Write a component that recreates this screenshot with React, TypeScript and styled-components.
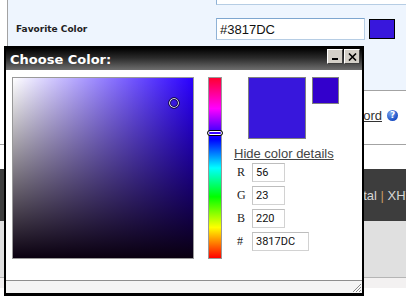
import React from "react";
import styled, { createGlobalStyle } from "styled-components";

const GlobalStyle = createGlobalStyle`
  html, body { margin: 0; padding: 0; background: #ffffff; overflow: hidden; }
  * { box-sizing: border-box; }
`;

const Page = styled.div`
  position: relative;
  width: 406px;
  height: 300px;
  overflow: hidden;
  font-family: "Liberation Sans", Arial, sans-serif;
`;

const FormPanel = styled.div`
  margin-left: 7px;
  height: 108px;
  background: #eef5fe;
  border-left: 1px solid #a3a3a3;
  border-bottom: 1px solid #a3a3a3;
  padding-left: 8px;
`;

const TopRow = styled.div`
  display: flex;
  padding-left: 200px;
  margin-top: -17px;
`;

const FieldRow = styled.div`
  display: flex;
  align-items: center;
  margin-top: 13px;
`;

const FieldLabel = styled.label`
  flex: none;
  width: 200px;
  font-family: "DejaVu Sans", Verdana, sans-serif;
  font-weight: bold;
  font-size: 9px;
  color: #222;
`;

const FieldInput = styled.div<{ $w: number }>`
  flex: none;
  width: ${(p) => p.$w}px;
  height: 22px;
  background: #fff;
  border: 1px solid #b6cde4;
  border-top-color: #7ea6cf;
  border-left-color: #8fb2d6;
  padding: 0 3px;
  display: flex;
  align-items: center;
  font-family: "Liberation Sans", Arial, sans-serif;
  font-size: 13px;
  color: #111;
`;

const FieldSwatch = styled.div<{ $c: string }>`
  flex: none;
  width: 26px;
  height: 20px;
  margin-left: 4px;
  background: ${(p) => p.$c};
  border: 1px solid #000;
`;

const LinkRow = styled.div`
  height: 54px;
  border-bottom: 1px solid #a3a3a3;
  display: flex;
  justify-content: flex-end;
  align-items: center;
  gap: 5px;
  padding: 0 8px 5px 0;
`;

const HelpLink = styled.a`
  font-size: 13px;
  color: #333;
  text-decoration: underline;
`;

const HelpIcon = styled.span`
  width: 11px;
  height: 11px;
  border-radius: 50%;
  background: radial-gradient(circle at 35% 30%, #7aa7f0, #1b4fc4 70%);
  color: #fff;
  font-size: 9px;
  font-weight: bold;
  line-height: 11px;
  text-align: center;
  font-family: "DejaVu Sans", sans-serif;
`;

const Spacer = styled.div`
  height: 24px;
`;

const DarkBar = styled.div`
  height: 52px;
  background: #3d3d3d;
  display: flex;
  align-items: center;
  padding-left: 343px;
  white-space: nowrap;
  font-size: 13px;
  color: #d6d6d6;
`;

const Sep = styled.span`
  color: #c79a62;
`;

const LightArea = styled.div`
  height: 57px;
  background: #e0e0e0;
  border-bottom: 1px solid #b5b5b5;
`;

const BottomStrip = styled.div`
  height: 10px;
  background: #f3f1f1;
`;

/* Dialog */
const Dialog = styled.div`
  position: absolute;
  left: 4px;
  top: 46px;
  width: 360px;
  height: 250px;
  border: 2px solid #000;
  border-bottom-width: 3px;
  background: #fff;
  display: flex;
  flex-direction: column;
`;

const TitleBar = styled.div`
  flex: none;
  height: 22px;
  background: linear-gradient(to bottom, #000 0%, #2a2a2a 45%, #6e6e6e 100%);
  display: flex;
  align-items: center;
  padding-left: 4px;
`;

const Title = styled.div`
  flex: 1;
  font-family: "DejaVu Sans", Verdana, sans-serif;
  font-weight: bold;
  font-size: 13px;
  color: #fff;
  padding-top: 1px;
`;

const TitleButtons = styled.div`
  display: flex;
  gap: 1px;
  align-self: flex-start;
  margin-top: 1px;
  margin-right: 2px;
`;

const TitleButton = styled.div`
  width: 16px;
  height: 15px;
  background: #d4d0c8;
  border: 1px solid;
  border-color: #ffffff #404040 #404040 #ffffff;
  display: flex;
  align-items: center;
  justify-content: center;
`;

const Content = styled.div`
  flex: none;
  height: 210px;
  display: flex;
  padding: 7px 0 0 6px;
`;

const ColorField = styled.div<{ $hue: string }>`
  position: relative;
  flex: none;
  width: 182px;
  height: 182px;
  border: 1px solid #999;
  background: linear-gradient(to top, #0a0010, rgba(0, 0, 0, 0)),
    linear-gradient(to right, #ffffff, rgba(255, 255, 255, 0)),
    ${(p) => p.$hue};
`;

const FieldMarker = styled.svg`
  position: absolute;
  width: 12px;
  height: 12px;
`;

const HueBar = styled.div`
  position: relative;
  flex: none;
  width: 14px;
  height: 182px;
  margin-left: 14px;
  border: 1px solid #999;
  background: linear-gradient(
    to bottom,
    #ff0030 0%,
    #ff00ff 17%,
    #0000ff 34%,
    #00ffff 50%,
    #00ff00 66%,
    #ffff00 83%,
    #ff0000 100%
  );
`;

const HueMarker = styled.div`
  position: absolute;
  left: -2px;
  width: 16px;
  height: 6px;
  border: 1px solid #000;
  border-radius: 3px;
  box-shadow: inset 0 0 0 1px #fff;
`;

const Details = styled.div`
  display: flex;
  flex-direction: column;
  margin-left: 12px;
`;

const SwatchRow = styled.div`
  display: flex;
  align-items: flex-start;
  gap: 6px;
  margin-left: 14px;
`;

const Swatch = styled.div<{ $c: string; $w: number; $h: number }>`
  width: ${(p) => p.$w}px;
  height: ${(p) => p.$h}px;
  background: ${(p) => p.$c};
  border: 1px solid #808080;
`;

const DetailsLink = styled.a`
  margin-top: 7px;
  font-family: "Liberation Sans", Arial, sans-serif;
  font-size: 13px;
  line-height: 15px;
  color: #444;
  text-decoration: underline;
`;

const ChannelList = styled.div`
  display: flex;
  flex-direction: column;
  gap: 4px;
  margin-top: 2px;
`;

const ChannelRow = styled.div`
  display: flex;
  align-items: center;
  padding-left: 3px;
`;

const ChannelLabel = styled.span`
  width: 15px;
  font-family: "Liberation Serif", "Times New Roman", serif;
  font-size: 12px;
  color: #222;
`;

const ChannelInput = styled.div<{ $w: number }>`
  width: ${(p) => p.$w}px;
  height: 19px;
  border: 1px solid #d2d2d2;
  border-top-color: #bdbdbd;
  border-left-color: #c6c6c6;
  padding-left: 3px;
  display: flex;
  align-items: center;
  font-family: Roboto, "Liberation Sans", sans-serif;
  font-size: 11px;
  color: #111;
`;

const DialogFooter = styled.div`
  flex: 1;
  border-top: 1px solid #8f8f8f;
  background: #f5f5f5;
  display: flex;
  justify-content: flex-end;
  align-items: flex-end;
`;

const Grip = styled.svg`
  width: 11px;
  height: 11px;
`;

const channels = [
  { label: "R", value: "56", w: 33 },
  { label: "G", value: "23", w: 33 },
  { label: "B", value: "220", w: 33 },
  { label: "#", value: "3817DC", w: 57 },
];

export default function App() {
  const sat = (220 - 23) / 220;
  const val = 220 / 255;
  const hue = 250;
  const mx = sat * 180 - 6;
  const my = (1 - val) * 180 - 6;
  const hy = ((360 - hue) / 360) * 180 - 3;

  return (
    <>
      <GlobalStyle />
      <Page>
        <FormPanel>
          <TopRow>
            <FieldInput $w={220} />
          </TopRow>
          <FieldRow>
            <FieldLabel>Favorite Color</FieldLabel>
            <FieldInput $w={149}>#3817DC</FieldInput>
            <FieldSwatch $c="#3817DC" />
          </FieldRow>
        </FormPanel>
        <LinkRow>
          <HelpLink>Forgot password</HelpLink>
          <HelpIcon>?</HelpIcon>
        </LinkRow>
        <Spacer />
        <DarkBar>
          Portal <Sep>&nbsp;|&nbsp;</Sep> XHTML
        </DarkBar>
        <LightArea />
        <BottomStrip />

        <Dialog>
          <TitleBar>
            <Title>Choose Color:</Title>
            <TitleButtons>
              <TitleButton>
                <svg width="8" height="9" viewBox="0 0 8 9">
                  <rect x="1" y="6" width="6" height="2" fill="#000" />
                </svg>
              </TitleButton>
              <TitleButton>
                <svg width="9" height="8" viewBox="0 0 9 8">
                  <path d="M1 0.5 L8 7.5 M8 0.5 L1 7.5" stroke="#000" strokeWidth="1.6" />
                </svg>
              </TitleButton>
            </TitleButtons>
          </TitleBar>
          <Content>
            <ColorField $hue="#2a00ff">
              <FieldMarker style={{ left: mx, top: my }} viewBox="0 0 12 12">
                <circle cx="6" cy="6" r="4.5" fill="none" stroke="#fff" strokeWidth="1.2" />
                <circle cx="6" cy="6" r="5.3" fill="none" stroke="#000" strokeWidth="0.8" />
                <circle cx="6" cy="6" r="3.6" fill="none" stroke="#000" strokeWidth="0.6" />
              </FieldMarker>
            </ColorField>
            <HueBar>
              <HueMarker style={{ top: hy }} />
            </HueBar>
            <Details>
              <SwatchRow>
                <Swatch $c="#3817DC" $w={58} $h={62} />
                <Swatch $c="#3300CC" $w={27} $h={27} />
              </SwatchRow>
              <DetailsLink>Hide color details</DetailsLink>
              <ChannelList>
                {channels.map((c) => (
                  <ChannelRow key={c.label}>
                    <ChannelLabel>{c.label}</ChannelLabel>
                    <ChannelInput $w={c.w}>{c.value}</ChannelInput>
                  </ChannelRow>
                ))}
              </ChannelList>
            </Details>
          </Content>
          <DialogFooter>
            <Grip viewBox="0 0 11 11">
              <path d="M10 2 L2 10 M10 5 L5 10 M10 8 L8 10" stroke="#8a8a8a" strokeWidth="1" />
              <path d="M10.8 2.8 L2.8 10.8 M10.8 5.8 L5.8 10.8" stroke="#fff" strokeWidth="0.8" />
            </Grip>
          </DialogFooter>
        </Dialog>
      </Page>
    </>
  );
}
